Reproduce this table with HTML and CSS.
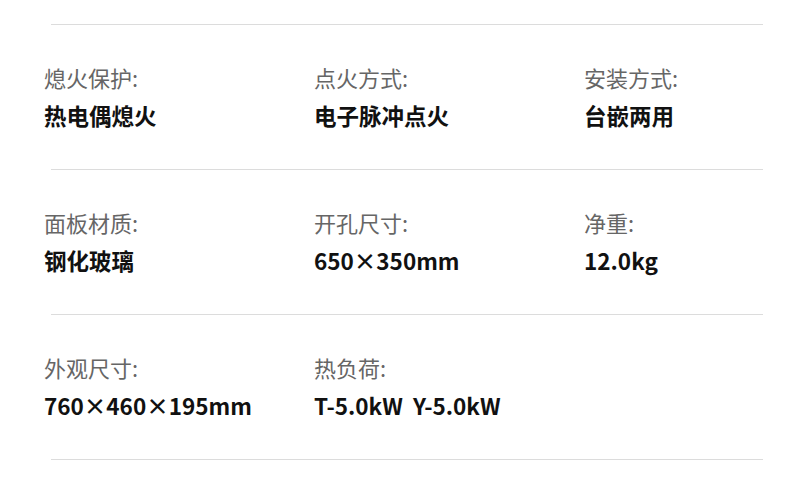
FILE: index.html
```html
<!DOCTYPE html>
<html lang="zh-CN">
<head>
<meta charset="utf-8">
<title>参数</title>
<link rel="stylesheet" href="styles.css">
</head>
<body>
<div class="specs">
  <div class="row">
    <div class="item"><div class="label">熄火保护:</div><div class="value">热电偶熄火</div></div>
    <div class="item"><div class="label">点火方式:</div><div class="value">电子脉冲点火</div></div>
    <div class="item"><div class="label">安装方式:</div><div class="value">台嵌两用</div></div>
  </div>
  <div class="row">
    <div class="item"><div class="label">面板材质:</div><div class="value">钢化玻璃</div></div>
    <div class="item"><div class="label">开孔尺寸:</div><div class="value">650×350mm</div></div>
    <div class="item"><div class="label">净重:</div><div class="value">12.0kg</div></div>
  </div>
  <div class="row">
    <div class="item"><div class="label">外观尺寸:</div><div class="value">760×460×195mm</div></div>
    <div class="item"><div class="label">热负荷:</div><div class="value">T-5.0kW&nbsp;&nbsp;Y-5.0kW</div></div>
    <div class="item"></div>
  </div>
  <div class="end"></div>
</div>
</body>
</html>
```
FILE: styles.css
```css
html, body {
  margin: 0;
  padding: 0;
  background: #ffffff;
}

body {
  font-family: "Noto Sans CJK SC", "Noto Sans", sans-serif;
  width: 790px;
  height: 488px;
  overflow: hidden;
}

.specs {
  padding-top: 24px;
  padding-left: 44px;
}

.row {
  position: relative;
  display: grid;
  grid-template-columns: 270px 270px 200px;
  padding-top: 38px;
  padding-bottom: 39px;
}

.row::before,
.end {
  content: "";
  display: block;
  height: 1px;
  width: 712px;
  background: #dcdcdc;
  margin-left: 7px;
}

.row::before {
  position: absolute;
  top: 0;
  left: 0;
}

.item {
  display: flex;
  flex-direction: column;
  gap: 8px;
}

.label {
  font-size: 22px;
  line-height: 30px;
  color: #666666;
  white-space: nowrap;
}

.value {
  font-size: 22.5px;
  line-height: 30px;
  font-weight: 700;
  color: #111111;
  white-space: nowrap;
}
```
